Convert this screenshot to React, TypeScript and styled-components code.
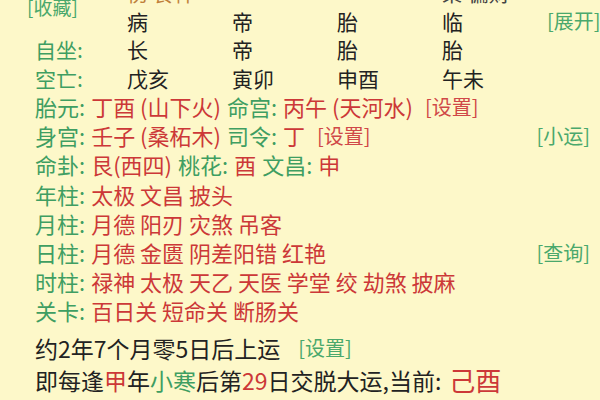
import React from "react";
import styled, { createGlobalStyle } from "styled-components";

const GlobalStyle = createGlobalStyle`
  html, body {
    margin: 0;
    padding: 0;
    background: #fdf8c9;
    overflow: hidden;
  }
  body {
    font-family: "Noto Sans CJK SC", "Noto Sans", sans-serif;
    color: #222;
  }
`;

const GREEN = "#3f9e62";
const RED = "#cc3838";
const LINK_GREEN = "#4aa86c";
const LINK_RED = "#d04848";

const Page = styled.div`
  width: 600px;
  height: 400px;
  overflow: hidden;
  background: #fdf8c9;
`;

const Inner = styled.div`
  margin-top: -22px;
  padding: 0 10px 0 35px;
  display: flex;
  flex-direction: column;
`;

const Table = styled.div`
  display: grid;
  grid-template-columns: 92px repeat(4, 105px) 1fr;
  grid-auto-rows: 28.5px;
  align-items: center;
  font-size: 21px;
  line-height: 28px;
`;

const Cell = styled.div<{ $tone?: "brown" | "dark" }>`
  white-space: nowrap;
  color: ${(p) => (p.$tone === "brown" ? "#c0803a" : p.$tone === "dark" ? "#444" : "#222")};
`;

const LabelCell = styled.div`
  color: ${GREEN};
  white-space: nowrap;
`;

const StarCell = styled.div`
  grid-row: span 2;
  margin-left: -8px;
  color: ${LINK_GREEN};
  font-size: 19px;
  align-self: center;
  padding-top: 1px;
`;

const Action = styled.div<{ $red?: boolean }>`
  color: ${(p) => (p.$red ? LINK_RED : LINK_GREEN)};
  font-size: 20px;
  white-space: nowrap;
  justify-self: end;
`;

const Lines = styled.div`
  display: flex;
  flex-direction: column;
  font-size: 22px;
`;

const Line = styled.div`
  display: flex;
  align-items: center;
  height: 29.2px;
  line-height: 29px;
  white-space: nowrap;
`;

const Label = styled.span`
  color: ${GREEN};
  margin-right: 6px;
`;

const Red = styled.span`
  color: ${RED};
`;

const Gap = styled.span`
  display: inline-block;
  width: 6px;
`;

const Push = styled.span`
  flex: 1;
`;

const Footer = styled.div<{ $top: number; $size: number }>`
  display: flex;
  align-items: center;
  font-size: ${(p) => p.$size}px;
  height: 32px;
  line-height: 32px;
  margin-top: ${(p) => p.$top}px;
  white-space: nowrap;
  color: #222;
`;

const Big = styled.span`
  color: ${RED};
  font-size: 26px;
  margin-left: 8px;
`;

const GreenText = styled.span`
  color: ${GREEN};
`;

const tableRows: { label?: string; cells: string[]; action?: string }[] = [
  { label: "自坐:", cells: ["长", "帝", "胎", "胎"] },
  { label: "空亡:", cells: ["戊亥", "寅卯", "申酉", "午未"] },
];

export default function App() {
  return (
    <Page>
      <GlobalStyle />
      <Inner>
        <Table>
          <StarCell>[收藏]</StarCell>
          <Cell $tone="brown">伤 食神</Cell>
          <Cell />
          <Cell />
          <Cell $tone="dark">枭 偏财</Cell>
          <Cell />
          <Cell>病</Cell>
          <Cell>帝</Cell>
          <Cell>胎</Cell>
          <Cell>临</Cell>
          <Action>[展开]</Action>
          {tableRows.map((r) => (
            <React.Fragment key={r.label}>
              <LabelCell>{r.label}</LabelCell>
              {r.cells.map((c, i) => (
                <Cell key={i}>{c}</Cell>
              ))}
              <Cell />
            </React.Fragment>
          ))}
        </Table>
        <Lines>
          <Line>
            <Label>胎元:</Label>
            <Red>丁酉 (山下火)</Red>
            <Gap />
            <Label>命宫:</Label>
            <Red>丙午 (天河水)</Red>
            <Gap />
            <Gap />
            <Action $red>[设置]</Action>
          </Line>
          <Line>
            <Label>身宫:</Label>
            <Red>壬子 (桑柘木)</Red>
            <Gap />
            <Label>司令:</Label>
            <Red>丁</Red>
            <Gap />
            <Gap />
            <Action $red>[设置]</Action>
            <Push />
            <Action>[小运]</Action>
          </Line>
          <Line>
            <Label>命卦:</Label>
            <Red>艮(西四)</Red>
            <Gap />
            <Label>桃花:</Label>
            <Red>酉</Red>
            <Gap />
            <Label>文昌:</Label>
            <Red>申</Red>
          </Line>
          <Line>
            <Label>年柱:</Label>
            <Red>太极 文昌 披头</Red>
          </Line>
          <Line>
            <Label>月柱:</Label>
            <Red>月德 阳刃 灾煞 吊客</Red>
          </Line>
          <Line>
            <Label>日柱:</Label>
            <Red>月德 金匮 阴差阳错 红艳</Red>
            <Push />
            <Action>[查询]</Action>
          </Line>
          <Line>
            <Label>时柱:</Label>
            <Red>禄神 太极 天乙 天医 学堂 绞 劫煞 披麻</Red>
          </Line>
          <Line>
            <Label>关卡:</Label>
            <Red>百日关 短命关 断肠关</Red>
          </Line>
        </Lines>
        <Footer $top={6} $size={23}>
          约2年7个月零5日后上运
          <Gap />
          <Gap />
          <Gap />
          <Action>[设置]</Action>
        </Footer>
        <Footer $top={0} $size={23}>
          即每逢<Red>甲</Red>年<GreenText>小寒</GreenText>后第<Red>29</Red>日交脱大运,当前:
          <Big>己酉</Big>
        </Footer>
      </Inner>
    </Page>
  );
}
